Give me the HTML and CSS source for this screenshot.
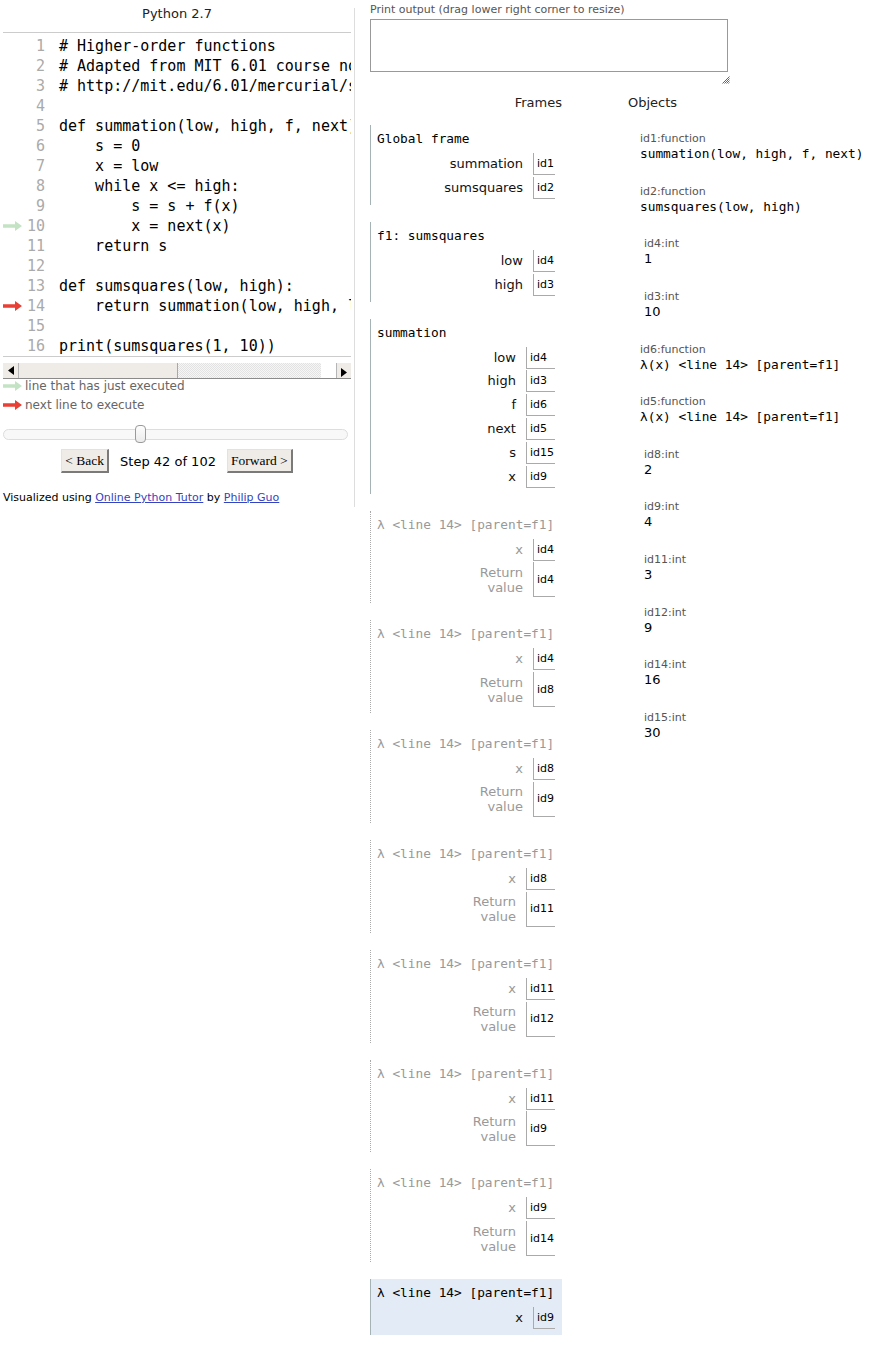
FILE: index.html
```html
<!DOCTYPE html>
<html>
<head>
<meta charset="utf-8">
<link rel="stylesheet" href="styles.css">
</head>
<body>
<div class="page">
  <div class="left">
    <div class="lang">Python 2.7</div>
    <div class="code">
      <div class="line"><span class="arrow"></span><span class="num">1</span><span class="src"># Higher-order functions</span></div>
      <div class="line"><span class="arrow"></span><span class="num">2</span><span class="src"># Adapted from MIT 6.01 course notes (Section A.2.2)</span></div>
      <div class="line"><span class="arrow"></span><span class="num">3</span><span class="src"># http://mit.edu/6.01/mercurial/spring10/www/handouts/readings.pdf</span></div>
      <div class="line"><span class="arrow"></span><span class="num">4</span><span class="src"></span></div>
      <div class="line"><span class="arrow"></span><span class="num">5</span><span class="src">def summation(low, high, f, next):</span></div>
      <div class="line"><span class="arrow"></span><span class="num">6</span><span class="src">    s = 0</span></div>
      <div class="line"><span class="arrow"></span><span class="num">7</span><span class="src">    x = low</span></div>
      <div class="line"><span class="arrow"></span><span class="num">8</span><span class="src">    while x &lt;= high:</span></div>
      <div class="line"><span class="arrow"></span><span class="num">9</span><span class="src">        s = s + f(x)</span></div>
      <div class="line"><span class="arrow"><svg class="arr green" width="19" height="10" viewBox="0 0 19 10"><path d="M0 3.3H12V0L19 5L12 10V6.7H0Z"/></svg></span><span class="num">10</span><span class="src">        x = next(x)</span></div>
      <div class="line"><span class="arrow"></span><span class="num">11</span><span class="src">    return s</span></div>
      <div class="line"><span class="arrow"></span><span class="num">12</span><span class="src"></span></div>
      <div class="line"><span class="arrow"></span><span class="num">13</span><span class="src">def sumsquares(low, high):</span></div>
      <div class="line"><span class="arrow"><svg class="arr red" width="19" height="10" viewBox="0 0 19 10"><path d="M0 3.3H12V0L19 5L12 10V6.7H0Z"/></svg></span><span class="num">14</span><span class="src">    return summation(low, high, lambda x: x * x, lambda x: x + 1)</span></div>
      <div class="line"><span class="arrow"></span><span class="num">15</span><span class="src"></span></div>
      <div class="line"><span class="arrow"></span><span class="num">16</span><span class="src">print(sumsquares(1, 10))</span></div>
    </div>
    <div class="hscroll">
      <div class="sbtn"><svg width="6" height="9" viewBox="0 0 6 9"><path d="M6 0V9L0 4.5Z"/></svg></div>
      <div class="thumb"></div>
      <div class="track"></div>
      <div class="sbtn right"><svg width="6" height="9" viewBox="0 0 6 9"><path d="M0 0V9L6 4.5Z"/></svg></div>
    </div>
    <div class="legend">
      <div class="legrow"><svg class="arr green" width="19" height="10" viewBox="0 0 19 10"><path d="M0 3.3H12V0L19 5L12 10V6.7H0Z"/></svg><span>line that has just executed</span></div>
      <div class="legrow"><svg class="arr red" width="19" height="10" viewBox="0 0 19 10"><path d="M0 3.3H12V0L19 5L12 10V6.7H0Z"/></svg><span>next line to execute</span></div>
    </div>
    <div class="slider">
      <div class="strack"></div>
      <div class="shandle"></div>
    </div>
    <div class="controls">
      <button class="btn">&lt; Back</button>
      <span class="step">Step 42 of 102</span>
      <button class="btn">Forward &gt;</button>
    </div>
    <div class="credit">Visualized using <a href="#">Online Python Tutor</a> by <a href="#">Philip Guo</a></div>
  </div>

  <div class="right">
    <div class="plabel">Print output (drag lower right corner to resize)</div>
    <div class="printwrap">
      <div class="printbox"></div>
      <div class="grip"><svg width="8" height="8" viewBox="0 0 8 8"><path d="M7.5 0.5L0.5 7.5M7.5 2.5L2.5 7.5M7.5 4.5L4.5 7.5M7.5 6.5L6.5 7.5" stroke="#555" stroke-width="0.9"/></svg></div>
    </div>
    <div class="heads">
      <div class="hframes">Frames</div>
      <div class="hobjects">Objects</div>
    </div>
    <div class="viz">
      <div class="frames">
        <div class="frame">
          <div class="fhead">Global frame</div>
          <div class="vars">
            <div class="vname">summation</div><div class="vval">id1</div>
            <div class="vname">sumsquares</div><div class="vval">id2</div>
          </div>
        </div>
        <div class="frame">
          <div class="fhead">f1: sumsquares</div>
          <div class="vars">
            <div class="vname">low</div><div class="vval">id4</div>
            <div class="vname">high</div><div class="vval">id3</div>
          </div>
        </div>
        <div class="frame">
          <div class="fhead">summation</div>
          <div class="vars">
            <div class="vname">low</div><div class="vval">id4</div>
            <div class="vname">high</div><div class="vval">id3</div>
            <div class="vname">f</div><div class="vval">id6</div>
            <div class="vname">next</div><div class="vval">id5</div>
            <div class="vname">s</div><div class="vval">id15</div>
            <div class="vname">x</div><div class="vval">id9</div>
          </div>
        </div>
        <div class="frame zombie">
          <div class="fhead">λ &lt;line 14&gt; [parent=f1]</div>
          <div class="vars">
            <div class="vname">x</div><div class="vval">id4</div>
            <div class="vname ret">Return<br>value</div><div class="vval retv">id4</div>
          </div>
        </div>
        <div class="frame zombie">
          <div class="fhead">λ &lt;line 14&gt; [parent=f1]</div>
          <div class="vars">
            <div class="vname">x</div><div class="vval">id4</div>
            <div class="vname ret">Return<br>value</div><div class="vval retv">id8</div>
          </div>
        </div>
        <div class="frame zombie">
          <div class="fhead">λ &lt;line 14&gt; [parent=f1]</div>
          <div class="vars">
            <div class="vname">x</div><div class="vval">id8</div>
            <div class="vname ret">Return<br>value</div><div class="vval retv">id9</div>
          </div>
        </div>
        <div class="frame zombie">
          <div class="fhead">λ &lt;line 14&gt; [parent=f1]</div>
          <div class="vars">
            <div class="vname">x</div><div class="vval">id8</div>
            <div class="vname ret">Return<br>value</div><div class="vval retv">id11</div>
          </div>
        </div>
        <div class="frame zombie">
          <div class="fhead">λ &lt;line 14&gt; [parent=f1]</div>
          <div class="vars">
            <div class="vname">x</div><div class="vval">id11</div>
            <div class="vname ret">Return<br>value</div><div class="vval retv">id12</div>
          </div>
        </div>
        <div class="frame zombie">
          <div class="fhead">λ &lt;line 14&gt; [parent=f1]</div>
          <div class="vars">
            <div class="vname">x</div><div class="vval">id11</div>
            <div class="vname ret">Return<br>value</div><div class="vval retv">id9</div>
          </div>
        </div>
        <div class="frame zombie">
          <div class="fhead">λ &lt;line 14&gt; [parent=f1]</div>
          <div class="vars">
            <div class="vname">x</div><div class="vval">id9</div>
            <div class="vname ret">Return<br>value</div><div class="vval retv">id14</div>
          </div>
        </div>
        <div class="frame active">
          <div class="fhead">λ &lt;line 14&gt; [parent=f1]</div>
          <div class="vars">
            <div class="vname">x</div><div class="vval">id9</div>
          </div>
        </div>
      </div>
      <div class="objects">
        <div class="obj"><div class="tlabel">id1:function</div><div class="oval mono">summation(low, high, f, next)</div></div>
        <div class="obj"><div class="tlabel">id2:function</div><div class="oval mono">sumsquares(low, high)</div></div>
        <div class="obj int"><div class="tlabel">id4:int</div><div class="oval">1</div></div>
        <div class="obj int"><div class="tlabel">id3:int</div><div class="oval">10</div></div>
        <div class="obj"><div class="tlabel">id6:function</div><div class="oval mono">λ(x) &lt;line 14&gt; [parent=f1]</div></div>
        <div class="obj"><div class="tlabel">id5:function</div><div class="oval mono">λ(x) &lt;line 14&gt; [parent=f1]</div></div>
        <div class="obj int"><div class="tlabel">id8:int</div><div class="oval">2</div></div>
        <div class="obj int"><div class="tlabel">id9:int</div><div class="oval">4</div></div>
        <div class="obj int"><div class="tlabel">id11:int</div><div class="oval">3</div></div>
        <div class="obj int"><div class="tlabel">id12:int</div><div class="oval">9</div></div>
        <div class="obj int"><div class="tlabel">id14:int</div><div class="oval">16</div></div>
        <div class="obj int"><div class="tlabel">id15:int</div><div class="oval">30</div></div>
      </div>
    </div>
  </div>
</div>
</body>
</html>
```

FILE: styles.css
```css
* { box-sizing: border-box; }
body {
  margin: 0;
  background: #fff;
  font-family: "DejaVu Sans", Verdana, sans-serif;
  color: #000;
}
.page {
  display: flex;
  align-items: flex-start;
}
.left {
  width: 355px;
  height: 499px;
  margin-top: 8px;
  border-right: 1px solid #ddd;
}
.lang {
  margin-left: 3px;
  width: 348px;
  height: 24px;
  line-height: 12px;
  font-size: 13px;
  text-align: center;
  color: #222;
}
.code {
  margin-left: 3px;
  width: 348px;
  border-top: 1px solid #ccc;
  border-bottom: 1px solid #ccc;
  padding-top: 3px;
  overflow: hidden;
  font-family: "DejaVu Sans Mono", monospace;
  font-size: 15px;
}
.line {
  display: flex;
  height: 20px;
  line-height: 20px;
  white-space: pre;
}
.arrow {
  flex: 0 0 20px;
  display: flex;
  align-items: center;
}
.num {
  flex: 0 0 22px;
  text-align: right;
  color: #aaa;
}
.src {
  padding-left: 14px;
  color: #000;
}
.arr { display: block; }
.arr.green { fill: #c4e3c4; }
.arr.red { fill: #e93f34; }

.hscroll {
  margin: 6px 0 0 3px;
  width: 348px;
  height: 16px;
  display: flex;
  border-bottom: 1px solid #8a8a8a;
}
.sbtn {
  flex: 0 0 16px;
  background: #efece7;
  border-right: 1px solid #b5b5b5;
  display: flex;
  align-items: center;
  justify-content: center;
  fill: #000;
}
.sbtn.right {
  flex-basis: 15px;
  border-right: none;
  border-left: 1px solid #b5b5b5;
}
.thumb {
  flex: 0 0 159px;
  background: #efece7;
  border-right: 1px solid #a8a8a8;
}
.track {
  flex: 1;
  background: repeating-conic-gradient(#e2e2e2 0 25%, #f6f6f6 0 50%) 0 0 / 2px 2px;
}
.legend {
  margin-top: -3px;
  font-size: 12px;
  color: #666;
}
.legrow {
  display: flex;
  align-items: center;
  height: 19px;
  gap: 3px;
}
.legrow .arr { margin-left: 3px; }
.slider {
  margin: 11px 0 0 3px;
  width: 345px;
  height: 18px;
  position: relative;
  display: flex;
  align-items: center;
}
.strack {
  width: 100%;
  height: 11px;
  border: 1px solid #ddd;
  border-radius: 6px;
  background: #f8f8f8;
}
.shandle {
  position: absolute;
  left: 132px;
  top: 0;
  width: 11px;
  height: 18px;
  border: 1px solid #9a9a9a;
  border-radius: 4px;
  background: linear-gradient(#fdfdfd, #ebebeb);
}
.controls {
  margin-top: 6px;
  display: flex;
  justify-content: center;
  align-items: center;
  gap: 11px;
  padding-left: 3px;
  width: 351px;
}
.btn {
  height: 24px;
  padding: 0 3px;
  font-family: "Liberation Serif", "Times New Roman", serif;
  font-size: 13.5px;
  color: #000;
  background: #efece7;
  border: 1px solid;
  border-color: #e4e2de #7a7a7a #7a7a7a #e4e2de;
  border-width: 1px 2px 2px 1px;
  border-radius: 0;
}
.step {
  font-size: 13px;
  color: #000;
}
.credit {
  margin: 18px 0 0 3px;
  font-size: 11px;
  line-height: 14px;
  color: #000;
}
.credit a { color: #3443c0; }

.right {
  margin-left: 15px;
  padding-top: 3px;
}
.plabel {
  font-size: 11px;
  line-height: 14px;
  color: #555;
}
.printwrap {
  margin-top: 2px;
  width: 361px;
  display: flex;
  flex-direction: column;
}
.printbox {
  width: 358px;
  height: 53px;
  border: 1px solid #999;
}
.grip {
  align-self: flex-end;
  height: 8px;
  margin-top: 4px;
  margin-right: 1px;
}
.grip svg { display: block; }
.heads {
  margin-top: 11px;
  display: flex;
  font-size: 13px;
  line-height: 16px;
  color: #222;
}
.hframes {
  width: 192px;
  text-align: right;
}
.hobjects {
  margin-left: 66px;
}
.viz {
  margin-top: 14px;
  display: flex;
  align-items: flex-start;
}
.frames {
  width: 192px;
  flex: 0 0 192px;
}
.frame {
  width: 192px;
  border-left: 1px solid #a6b3b6;
  padding: 2px 7px 6px 6px;
  margin-bottom: 17px;
}
.frame.zombie { border-left: 1px dotted #aaa; }
.frame.active { background: #e2ebf6; }
.fhead {
  font-family: "DejaVu Sans Mono", monospace;
  font-size: 12.8px;
  line-height: 15px;
  margin: 4px 0 0;
  white-space: nowrap;
  color: #000;
}
.zombie .fhead { color: #999; }
.vars {
  margin-top: 7px;
  display: grid;
  grid-template-columns: 1fr auto;
  row-gap: 1.8px;
}
.vname {
  text-align: right;
  padding-right: 10px;
  font-size: 13px;
  line-height: 22px;
  color: #111;
}
.zombie .vname { color: #999; }
.vname.ret {
  line-height: 15px;
  padding-top: 2.5px;
  padding-bottom: 2.5px;
}
.vval {
  height: 22px;
  border-left: 1px solid #aaa;
  border-bottom: 1px solid #aaa;
  padding: 0 1px 0 3px;
  font-size: 11px;
  display: flex;
  align-items: center;
  color: #000;
}
.vval.retv { height: 35px; }
.objects {
  margin-top: 7px;
  margin-left: 66px;
  padding-left: 12px;
}
.obj {
  margin-bottom: 22.64px;
}
.obj.int { padding-left: 4px; }
.tlabel {
  font-size: 11px;
  line-height: 14px;
  color: #555;
}
.oval {
  font-size: 13px;
  line-height: 16px;
  color: #000;
  white-space: nowrap;
}
.oval.mono {
  font-family: "DejaVu Sans Mono", monospace;
  font-size: 12.8px;
}
```
